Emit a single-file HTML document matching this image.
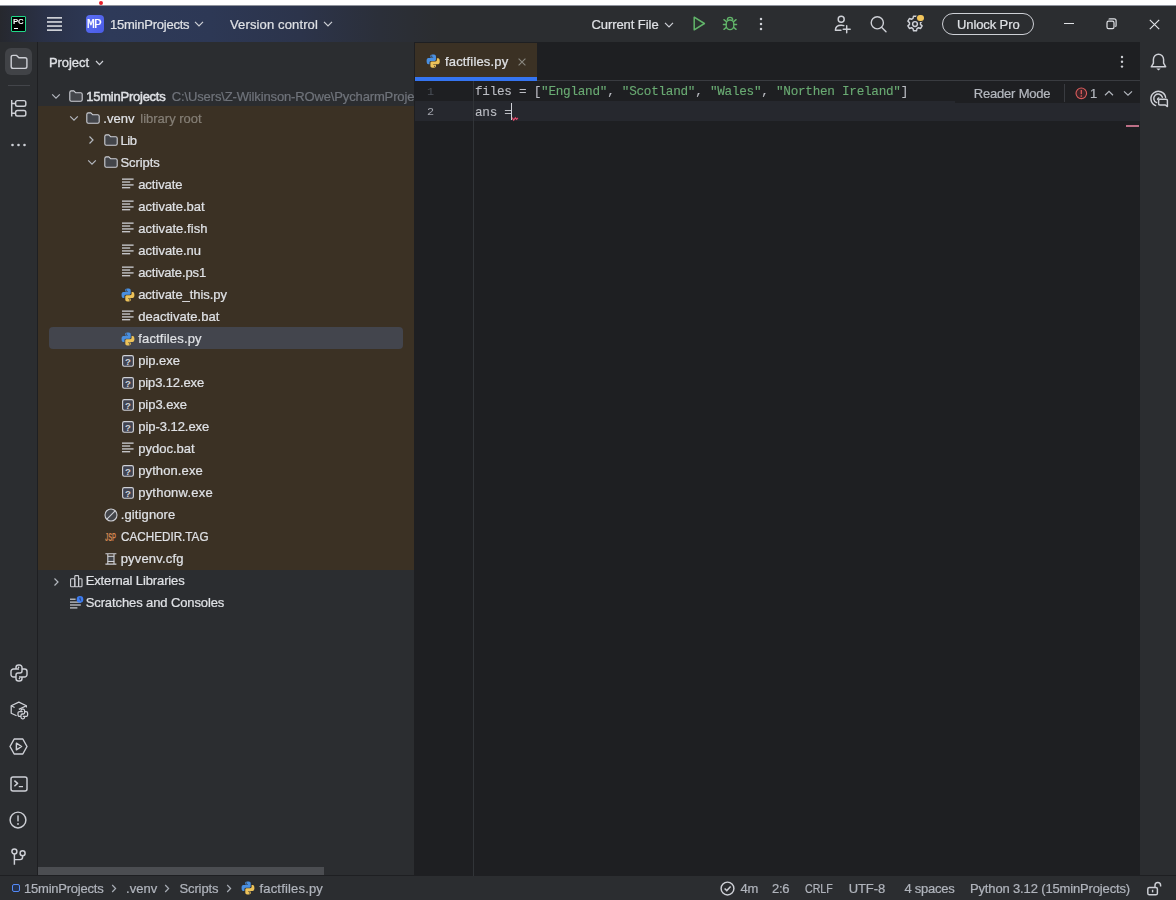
<!DOCTYPE html>
<html lang="en">
<head>
<meta charset="utf-8">
<title>PyCharm - factfiles.py</title>
<style>
*{box-sizing:border-box;margin:0;padding:0}
html,body{width:1176px;height:900px;overflow:hidden;background:#1e1f22}
body{position:relative;font-family:"Liberation Sans",sans-serif;font-size:13px;color:#dfe1e5;-webkit-font-smoothing:antialiased}
.abs{position:absolute}
.t{position:absolute;white-space:nowrap;line-height:16px;height:16px;-webkit-text-stroke:0.22px currentColor}
svg{position:absolute;overflow:visible}
/* regions */
#topwhite{left:0;top:0;width:1176px;height:5px;background:#fff}
#topedge{left:0;top:5px;width:1176px;height:1px;background:#8f939d}
#titlebar{left:0;top:6px;width:1176px;height:36px;background:linear-gradient(90deg,#26282e 0px,#2a3147 45px,#2e3a59 110px,#2d3855 210px,#2c344b 300px,#2b2f39 380px,#2b2d30 440px)}
#rail{left:0;top:42px;width:38px;height:834px;background:#2b2d30;border-right:1px solid #1e1f22}
#proj{left:38px;top:42px;width:376px;height:834px;background:#2b2d30}
#brown{left:38px;top:106px;width:376px;height:464px;background:#3b3124}
#projedge{left:414px;top:42px;width:1px;height:834px;background:#1e1f22}
#editor{left:415px;top:42px;width:725px;height:834px;background:#1e1f22}
#rrail{left:1140px;top:42px;width:36px;height:834px;background:#2b2d30}
#status{left:0;top:875.4px;width:1176px;height:24.6px;background:#2b2d30;border-top:1px solid #1e1f22}
.row{position:absolute;left:38px;width:376px;height:22px}
.mono{font-family:"Liberation Mono",monospace}
</style>
</head>
<body>
<div class="abs" id="topwhite"></div>
<div class="abs" id="topedge"></div>
<div class="abs" style="left:99px;top:1px;width:4px;height:4px;border-radius:50%;background:#e8202a"></div>
<div class="abs" id="titlebar"></div>
<div class="abs" id="rail"></div>
<div class="abs" id="proj"></div>
<div class="abs" id="brown"></div>
<div class="abs" id="projedge"></div>
<div class="abs" id="editor"></div>
<div class="abs" id="rrail"></div>
<div class="abs" id="status"></div>
<!-- PC logo -->
<div class="abs" style="left:11px;top:16px;width:15px;height:16px;background:#000;border:1.5px solid #21d789;border-radius:1px"></div>
<span class="t" style="left:13.2px;top:13.6px;font-size:7.8px;font-weight:bold;color:#fff;letter-spacing:-0.3px;will-change:transform;-webkit-text-stroke:0">PC</span>
<div class="abs" style="left:14px;top:27.5px;width:4px;height:1.3px;background:#fff"></div>
<!-- hamburger -->
<svg style="left:46px;top:16px" width="17" height="16" viewBox="0 0 17 16"><g fill="#ced0d6"><rect x="1" y="1" width="15" height="1.7"/><rect x="1" y="5.1" width="15" height="1.7"/><rect x="1" y="9.2" width="15" height="1.7"/><rect x="1" y="13.3" width="15" height="1.7"/></g></svg>
<!-- MP badge -->
<div class="abs" style="left:86px;top:15px;width:18px;height:18px;border-radius:4px;background:linear-gradient(135deg,#5b6ef5,#4a5ce6)"></div>
<span class="t mono" style="left:87.2px;top:16.8px;font-size:13px;color:#fff;letter-spacing:-0.7px;will-change:transform">MP</span>
<!-- chevrons -->
<svg style="left:194.3px;top:21.3px" width="10" height="6" viewBox="0 0 10 6"><path d="M1 0.9 L5 4.9 L9 0.9" fill="none" stroke="#ced0d6" stroke-width="1.2"/></svg>
<svg style="left:323px;top:21.3px" width="10" height="6" viewBox="0 0 10 6"><path d="M1 0.9 L5 4.9 L9 0.9" fill="none" stroke="#ced0d6" stroke-width="1.2"/></svg>
<svg style="left:663.6px;top:21.6px" width="10" height="6" viewBox="0 0 10 6"><path d="M1 0.9 L5 4.9 L9 0.9" fill="none" stroke="#ced0d6" stroke-width="1.2"/></svg>
<!-- run -->
<svg style="left:692px;top:15px" width="15" height="17" viewBox="0 0 15 17"><path d="M2.2 2.2 L12.4 8.5 L2.2 14.8 Z" fill="#2a3330" stroke="#62b56a" stroke-width="1.5" stroke-linejoin="round"/></svg>
<!-- debug -->
<svg style="left:722px;top:15px" width="16" height="17" viewBox="0 0 16 17"><g fill="none" stroke="#62b56a" stroke-width="1.35" stroke-linecap="round"><path d="M5.3 5 a2.7 2.7 0 0 1 5.4 0"/><rect x="4.2" y="5" width="7.6" height="9.6" rx="3.8" fill="#2a3330"/><path d="M4.2 9.5 H1.4 M11.8 9.5 H14.6 M4.4 6.6 L1.9 4.6 M11.6 6.6 L14.1 4.6 M4.4 12.4 L1.9 14.4 M11.6 12.4 L14.1 14.4"/></g></svg>
<!-- dots -->
<svg style="left:759px;top:17px" width="4" height="14" viewBox="0 0 4 14"><g fill="#ced0d6"><circle cx="2" cy="2" r="1.25"/><circle cx="2" cy="7" r="1.25"/><circle cx="2" cy="12" r="1.25"/></g></svg>
<!-- add user -->
<svg style="left:834px;top:15px" width="18" height="18" viewBox="0 0 18 18"><g fill="none" stroke="#ced0d6" stroke-width="1.45" stroke-linecap="round"><circle cx="7.2" cy="4.3" r="3"/><path d="M1.4 15.2 c0 -3.2 2.4 -5 5.8 -5 c1 0 1.8 0.15 2.6 0.45 M1.4 15.2 H7"/><path d="M12.7 10.8 V17.8 M9.2 14.3 H16.2"/></g></svg>
<!-- search -->
<svg style="left:869px;top:15px" width="19" height="19" viewBox="0 0 19 19"><g fill="none" stroke="#ced0d6" stroke-width="1.4" stroke-linecap="round"><circle cx="8.3" cy="7.8" r="6.1"/><path d="M12.8 12.4 L17 16.7"/></g></svg>
<!-- gear -->
<svg style="left:906px;top:15px" width="18" height="18" viewBox="0 0 18 18"><g fill="none" stroke="#ced0d6" stroke-width="1.45" stroke-linejoin="round"><path d="M7.5 1.2 h3 l0.5 2.2 l1.5 0.85 l2.1 -0.7 l1.5 2.6 l-1.6 1.5 v1.7 l1.6 1.5 l-1.5 2.6 l-2.1 -0.7 l-1.5 0.85 l-0.5 2.2 h-3 l-0.5 -2.2 l-1.5 -0.85 l-2.1 0.7 l-1.5 -2.6 l1.6 -1.5 v-1.7 l-1.6 -1.5 l1.5 -2.6 l2.1 0.7 l1.5 -0.85 z"/><circle cx="9" cy="9" r="2.4"/></g></svg>
<div class="abs" style="left:917.4px;top:14.6px;width:6.6px;height:6.6px;border-radius:50%;background:#f2c55c;box-shadow:0 0 0 1px #2b2d30"></div>
<!-- unlock pro pill -->
<div class="abs" style="left:942px;top:12.5px;width:92px;height:22px;border-radius:11px;border:1.3px solid #ced0d6"></div>
<!-- window controls -->
<div class="abs" style="left:1064px;top:22.6px;width:9.5px;height:1.3px;background:#dfe1e5"></div>
<svg style="left:1106px;top:17.5px" width="11" height="12" viewBox="0 0 11 12"><g fill="none" stroke="#dfe1e5" stroke-width="1.2"><rect x="1" y="3.2" width="7" height="7.4" rx="1.6"/><path d="M3 1.6 q0 -0.8 0.9 -0.8 h4.2 q2 0 2 2 v4.6 q0 0.9 -0.9 0.9"/></g></svg>
<svg style="left:1149px;top:18.5px" width="11" height="11" viewBox="0 0 11 11"><path d="M0.8 0.8 L10.2 10.2 M10.2 0.8 L0.8 10.2" fill="none" stroke="#dfe1e5" stroke-width="1.2"/></svg>

<!-- project button -->
<div class="abs" style="left:5px;top:48px;width:27px;height:27px;border-radius:6px;background:#414347"></div>
<svg style="left:9.5px;top:54px" width="18" height="16" viewBox="0 0 18 16"><path d="M1.2 3.2 q0 -1.8 1.8 -1.8 h3.6 l2.3 2.4 h6.2 q1.8 0 1.8 1.8 v7 q0 1.8 -1.8 1.8 h-12.1 q-1.8 0 -1.8 -1.8 z" fill="none" stroke="#ced0d6" stroke-width="1.4" stroke-linejoin="round"/></svg>
<div class="abs" style="left:8px;top:84.5px;width:22px;height:1.2px;background:#43454a"></div>
<!-- structure -->
<svg style="left:10px;top:99px" width="17" height="19" viewBox="0 0 17 19"><g fill="none" stroke="#ced0d6" stroke-width="1.45"><path d="M1.7 1 V17.4 M1.7 4.4 H5.6 M1.7 14.2 H5.6"/><rect x="5.6" y="1.6" width="10.2" height="5.6" rx="1.8"/><rect x="5.6" y="11.4" width="10.2" height="5.6" rx="1.8"/></g></svg>
<!-- dots -->
<svg style="left:10px;top:143px" width="17" height="4" viewBox="0 0 17 4"><g fill="#ced0d6"><circle cx="2.5" cy="2" r="1.3"/><circle cx="8.5" cy="2" r="1.3"/><circle cx="14.5" cy="2" r="1.3"/></g></svg>
<!-- python console -->
<svg style="left:9.5px;top:663.8px" width="18" height="18" viewBox="0 0 18 18"><path d="M6 5 V3.5 A2.5 2.5 0 0 1 8.5 1 H9.5 A2.5 2.5 0 0 1 12 3.5 V7 A2 2 0 0 1 10 9 H8 A2 2 0 0 0 6 11 V13 H3.5 A2.5 2.5 0 0 1 1 10.5 V7.5 A2.5 2.5 0 0 1 3.5 5 H9 M12 13 V14.5 A2.5 2.5 0 0 1 9.5 17 H8.5 A2.5 2.5 0 0 1 6 14.5 V13 M8 9 H10 A2 2 0 0 0 12 7 V5 H14.5 A2.5 2.5 0 0 1 17 7.5 V10.5 A2.5 2.5 0 0 1 14.5 13 H9" fill="none" stroke="#ced0d6" stroke-width="1.45" stroke-linejoin="round"/><circle cx="8.6" cy="3.4" r="0.8" fill="#ced0d6"/><circle cx="9.4" cy="14.6" r="0.8" fill="#ced0d6"/></svg>
<!-- python packages -->
<svg style="left:9.5px;top:700.5px" width="19" height="19" viewBox="0 0 19 19"><g fill="none" stroke="#ced0d6" stroke-width="1.25" stroke-linejoin="round"><path d="M6.6 14.8 L1.2 12.2 V4.8 L8.8 1.1 L16.4 4.8 V6.6"/><path d="M1.2 4.8 L4.6 6.5 M16.4 4.8 L8.8 8.4"/><g transform="translate(7.4,7.6) scale(0.6)"><path d="M6 5 V3.5 A2.5 2.5 0 0 1 8.5 1 H9.5 A2.5 2.5 0 0 1 12 3.5 V7 A2 2 0 0 1 10 9 H8 A2 2 0 0 0 6 11 V13 H3.5 A2.5 2.5 0 0 1 1 10.5 V7.5 A2.5 2.5 0 0 1 3.5 5 H9 M12 13 V14.5 A2.5 2.5 0 0 1 9.5 17 H8.5 A2.5 2.5 0 0 1 6 14.5 V13 M8 9 H10 A2 2 0 0 0 12 7 V5 H14.5 A2.5 2.5 0 0 1 17 7.5 V10.5 A2.5 2.5 0 0 1 14.5 13 H9" stroke-width="2.1"/></g></g></svg>
<!-- services -->
<svg style="left:9px;top:738px" width="19" height="17" viewBox="0 0 19 17"><g fill="none" stroke="#ced0d6" stroke-width="1.45" stroke-linejoin="round"><path d="M5.2 1 H13.8 L18 8.5 L13.8 16 H5.2 L1 8.5 Z"/><path d="M7.4 5.2 L12.6 8.5 L7.4 11.8 Z"/></g></svg>
<!-- terminal -->
<svg style="left:9.5px;top:775.5px" width="18" height="16" viewBox="0 0 18 16"><g fill="none" stroke="#ced0d6" stroke-width="1.45" stroke-linejoin="round"><rect x="1" y="1" width="16" height="14" rx="2"/><path d="M4.4 4.6 L7.6 7.4 L4.4 10.2 M8.8 10.6 H13"/></g></svg>
<!-- problems -->
<svg style="left:9.3px;top:810.8px" width="18" height="18" viewBox="0 0 18 18"><circle cx="9" cy="9" r="7.9" fill="none" stroke="#ced0d6" stroke-width="1.45"/><rect x="8.3" y="4.4" width="1.4" height="6" fill="#ced0d6"/><circle cx="9" cy="12.9" r="0.95" fill="#ced0d6"/></svg>
<!-- git -->
<svg style="left:10px;top:848px" width="17" height="18" viewBox="0 0 17 18"><g fill="none" stroke="#ced0d6" stroke-width="1.45"><circle cx="4.4" cy="3.5" r="2.5"/><circle cx="12.6" cy="5.3" r="2.5"/><path d="M4.4 6 V16.8 M12.6 7.8 V9 q0 2.6 -2.6 2.6 H4.4"/></g></svg>

<div class="abs" style="left:49px;top:327.2px;width:354px;height:22px;border-radius:4px;background:#43454d"></div>
<svg style="left:51.4px;top:93.0px" width="10" height="7" viewBox="0 0 10 7"><path d="M1.2 1.4 L5 5.2 L8.8 1.4" fill="none" stroke="#b4b8bf" stroke-width="1.2"/></svg>
<svg style="left:68.6px;top:89.8px" width="14" height="12" viewBox="0 0 14 12"><path d="M0.8 2.4 q0 -1.5 1.5 -1.5 h2.6 l1.9 1.9 h4.9 q1.5 0 1.5 1.5 v5.4 q0 1.5 -1.5 1.5 h-9.4 q-1.5 0 -1.5 -1.5 z" fill="#43454a" stroke="#ced0d6" stroke-width="1.1" stroke-linejoin="round"/></svg>
<svg style="left:69.0px;top:115.0px" width="10" height="7" viewBox="0 0 10 7"><path d="M1.2 1.4 L5 5.2 L8.8 1.4" fill="none" stroke="#b4b8bf" stroke-width="1.2"/></svg>
<svg style="left:86.0px;top:111.8px" width="14" height="12" viewBox="0 0 14 12"><path d="M0.8 2.4 q0 -1.5 1.5 -1.5 h2.6 l1.9 1.9 h4.9 q1.5 0 1.5 1.5 v5.4 q0 1.5 -1.5 1.5 h-9.4 q-1.5 0 -1.5 -1.5 z" fill="#43454a" stroke="#ced0d6" stroke-width="1.1" stroke-linejoin="round"/></svg>
<svg style="left:87.8px;top:135.0px" width="7" height="10" viewBox="0 0 7 10"><path d="M1.5 1.5 L5 5 L1.5 8.5" fill="none" stroke="#b4b8bf" stroke-width="1.2"/></svg>
<svg style="left:103.6px;top:133.8px" width="14" height="12" viewBox="0 0 14 12"><path d="M0.8 2.4 q0 -1.5 1.5 -1.5 h2.6 l1.9 1.9 h4.9 q1.5 0 1.5 1.5 v5.4 q0 1.5 -1.5 1.5 h-9.4 q-1.5 0 -1.5 -1.5 z" fill="#43454a" stroke="#ced0d6" stroke-width="1.1" stroke-linejoin="round"/></svg>
<svg style="left:86.5px;top:159.0px" width="10" height="7" viewBox="0 0 10 7"><path d="M1.2 1.4 L5 5.2 L8.8 1.4" fill="none" stroke="#b4b8bf" stroke-width="1.2"/></svg>
<svg style="left:103.6px;top:155.8px" width="14" height="12" viewBox="0 0 14 12"><path d="M0.8 2.4 q0 -1.5 1.5 -1.5 h2.6 l1.9 1.9 h4.9 q1.5 0 1.5 1.5 v5.4 q0 1.5 -1.5 1.5 h-9.4 q-1.5 0 -1.5 -1.5 z" fill="#43454a" stroke="#ced0d6" stroke-width="1.1" stroke-linejoin="round"/></svg>
<svg style="left:122.0px;top:178.3px" width="12" height="11" viewBox="0 0 12 11"><g fill="#d3d5da"><rect x="0" y="0.5" width="11.6" height="1.25"/><rect x="0" y="3.4" width="8.2" height="1.25"/><rect x="0" y="6.3" width="11.6" height="1.25"/><rect x="0" y="9.1" width="8.2" height="1.25"/></g></svg>
<svg style="left:122.0px;top:200.3px" width="12" height="11" viewBox="0 0 12 11"><g fill="#d3d5da"><rect x="0" y="0.5" width="11.6" height="1.25"/><rect x="0" y="3.4" width="8.2" height="1.25"/><rect x="0" y="6.3" width="11.6" height="1.25"/><rect x="0" y="9.1" width="8.2" height="1.25"/></g></svg>
<svg style="left:122.0px;top:222.3px" width="12" height="11" viewBox="0 0 12 11"><g fill="#d3d5da"><rect x="0" y="0.5" width="11.6" height="1.25"/><rect x="0" y="3.4" width="8.2" height="1.25"/><rect x="0" y="6.3" width="11.6" height="1.25"/><rect x="0" y="9.1" width="8.2" height="1.25"/></g></svg>
<svg style="left:122.0px;top:244.3px" width="12" height="11" viewBox="0 0 12 11"><g fill="#d3d5da"><rect x="0" y="0.5" width="11.6" height="1.25"/><rect x="0" y="3.4" width="8.2" height="1.25"/><rect x="0" y="6.3" width="11.6" height="1.25"/><rect x="0" y="9.1" width="8.2" height="1.25"/></g></svg>
<svg style="left:122.0px;top:266.3px" width="12" height="11" viewBox="0 0 12 11"><g fill="#d3d5da"><rect x="0" y="0.5" width="11.6" height="1.25"/><rect x="0" y="3.4" width="8.2" height="1.25"/><rect x="0" y="6.3" width="11.6" height="1.25"/><rect x="0" y="9.1" width="8.2" height="1.25"/></g></svg>
<svg style="left:121.0px;top:287.5px" width="14" height="14" viewBox="0 0 14 14"><path d="M6.9 0.6 C4.2 0.6 4.3 1.8 4.3 1.8 V3.5 H7 V4 H2.4 C2.4 4 0.6 3.8 0.6 6.9 C0.6 10 2.2 9.9 2.2 9.9 H3.4 V8.3 C3.4 8.3 3.3 6.7 5 6.7 H8.3 C8.3 6.7 9.7 6.7 9.7 5.3 V2.3 C9.7 2.3 9.9 0.6 6.9 0.6 Z" fill="#4a8fe0"/><path d="M7.1 13.4 C9.8 13.4 9.7 12.2 9.7 12.2 V10.5 H7 V10 H11.6 C11.6 10 13.4 10.2 13.4 7.1 C13.4 4 11.8 4.1 11.8 4.1 H10.6 V5.7 C10.6 5.7 10.7 7.3 9 7.3 H5.7 C5.7 7.3 4.3 7.3 4.3 8.7 V11.7 C4.3 11.7 4.1 13.4 7.1 13.4 Z" fill="#ecc25a"/><circle cx="5.6" cy="2.1" r="0.55" fill="#2b2d30"/><circle cx="8.4" cy="11.9" r="0.55" fill="#2b2d30"/></svg>
<svg style="left:122.0px;top:310.3px" width="12" height="11" viewBox="0 0 12 11"><g fill="#d3d5da"><rect x="0" y="0.5" width="11.6" height="1.25"/><rect x="0" y="3.4" width="8.2" height="1.25"/><rect x="0" y="6.3" width="11.6" height="1.25"/><rect x="0" y="9.1" width="8.2" height="1.25"/></g></svg>
<svg style="left:121.0px;top:331.5px" width="14" height="14" viewBox="0 0 14 14"><path d="M6.9 0.6 C4.2 0.6 4.3 1.8 4.3 1.8 V3.5 H7 V4 H2.4 C2.4 4 0.6 3.8 0.6 6.9 C0.6 10 2.2 9.9 2.2 9.9 H3.4 V8.3 C3.4 8.3 3.3 6.7 5 6.7 H8.3 C8.3 6.7 9.7 6.7 9.7 5.3 V2.3 C9.7 2.3 9.9 0.6 6.9 0.6 Z" fill="#4a8fe0"/><path d="M7.1 13.4 C9.8 13.4 9.7 12.2 9.7 12.2 V10.5 H7 V10 H11.6 C11.6 10 13.4 10.2 13.4 7.1 C13.4 4 11.8 4.1 11.8 4.1 H10.6 V5.7 C10.6 5.7 10.7 7.3 9 7.3 H5.7 C5.7 7.3 4.3 7.3 4.3 8.7 V11.7 C4.3 11.7 4.1 13.4 7.1 13.4 Z" fill="#ecc25a"/><circle cx="5.6" cy="2.1" r="0.55" fill="#2b2d30"/><circle cx="8.4" cy="11.9" r="0.55" fill="#2b2d30"/></svg>
<svg style="left:121.8px;top:354.6px" width="12" height="12" viewBox="0 0 12 12"><rect x="0.6" y="0.6" width="10.8" height="10.6" rx="1.6" fill="#40424f" stroke="#ced0d6" stroke-width="1.15"/><text x="6" y="9.5" text-anchor="middle" font-family="Liberation Sans,sans-serif" font-size="9.6" font-weight="bold" fill="#ced0d6">?</text></svg>
<svg style="left:121.8px;top:376.6px" width="12" height="12" viewBox="0 0 12 12"><rect x="0.6" y="0.6" width="10.8" height="10.6" rx="1.6" fill="#40424f" stroke="#ced0d6" stroke-width="1.15"/><text x="6" y="9.5" text-anchor="middle" font-family="Liberation Sans,sans-serif" font-size="9.6" font-weight="bold" fill="#ced0d6">?</text></svg>
<svg style="left:121.8px;top:398.6px" width="12" height="12" viewBox="0 0 12 12"><rect x="0.6" y="0.6" width="10.8" height="10.6" rx="1.6" fill="#40424f" stroke="#ced0d6" stroke-width="1.15"/><text x="6" y="9.5" text-anchor="middle" font-family="Liberation Sans,sans-serif" font-size="9.6" font-weight="bold" fill="#ced0d6">?</text></svg>
<svg style="left:121.8px;top:420.6px" width="12" height="12" viewBox="0 0 12 12"><rect x="0.6" y="0.6" width="10.8" height="10.6" rx="1.6" fill="#40424f" stroke="#ced0d6" stroke-width="1.15"/><text x="6" y="9.5" text-anchor="middle" font-family="Liberation Sans,sans-serif" font-size="9.6" font-weight="bold" fill="#ced0d6">?</text></svg>
<svg style="left:122.0px;top:442.3px" width="12" height="11" viewBox="0 0 12 11"><g fill="#d3d5da"><rect x="0" y="0.5" width="11.6" height="1.25"/><rect x="0" y="3.4" width="8.2" height="1.25"/><rect x="0" y="6.3" width="11.6" height="1.25"/><rect x="0" y="9.1" width="8.2" height="1.25"/></g></svg>
<svg style="left:121.8px;top:464.6px" width="12" height="12" viewBox="0 0 12 12"><rect x="0.6" y="0.6" width="10.8" height="10.6" rx="1.6" fill="#40424f" stroke="#ced0d6" stroke-width="1.15"/><text x="6" y="9.5" text-anchor="middle" font-family="Liberation Sans,sans-serif" font-size="9.6" font-weight="bold" fill="#ced0d6">?</text></svg>
<svg style="left:121.8px;top:486.6px" width="12" height="12" viewBox="0 0 12 12"><rect x="0.6" y="0.6" width="10.8" height="10.6" rx="1.6" fill="#40424f" stroke="#ced0d6" stroke-width="1.15"/><text x="6" y="9.5" text-anchor="middle" font-family="Liberation Sans,sans-serif" font-size="9.6" font-weight="bold" fill="#ced0d6">?</text></svg>
<svg style="left:103.5px;top:508.0px" width="14" height="14" viewBox="0 0 14 14"><circle cx="7" cy="7" r="6" fill="#43454a" stroke="#ced0d6" stroke-width="1.1"/><path d="M2.9 11.1 L11.1 2.9" stroke="#ced0d6" stroke-width="1.1"/></svg>
<span class="t" style="left:104.6px;top:529.0px;font-size:10.5px;font-weight:bold;color:#cf8450;letter-spacing:-0.2px;-webkit-text-stroke:0;transform:scaleX(0.56);transform-origin:0 50%">JSP</span>
<svg style="left:104.8px;top:553.2px" width="12" height="12" viewBox="0 0 12 12"><g fill="none" stroke="#ced0d6" stroke-width="1.1"><path d="M0.4 0.7 H11.4 M0.4 11.1 H11.4 M2.8 0.7 V3.3 M9 0.7 V3.3 M2.8 8.5 V11.1 M9 8.5 V11.1"/><rect x="2.8" y="3.3" width="6.2" height="5.2" fill="#43454a"/></g></svg>
<svg style="left:52.6px;top:576.5px" width="7" height="10" viewBox="0 0 7 10"><path d="M1.5 1.5 L5 5 L1.5 8.5" fill="none" stroke="#b4b8bf" stroke-width="1.2"/></svg>
<svg style="left:69.6px;top:575.2px" width="13" height="13" viewBox="0 0 13 13"><g fill="none" stroke="#ced0d6" stroke-width="1.1" stroke-linejoin="round"><rect x="0.6" y="3.8" width="4.2" height="8" rx="0.8"/><rect x="4.8" y="0.6" width="3.8" height="11.2" rx="0.8"/><rect x="8.6" y="3.8" width="3.4" height="8" rx="0.8"/></g></svg>
<svg style="left:70.0px;top:596.4px" width="14" height="13" viewBox="0 0 14 13"><g fill="#ced0d6"><rect x="0" y="2.6" width="5.6" height="1.2"/><rect x="0" y="5.5" width="10.8" height="1.2"/><rect x="0" y="8.4" width="10.8" height="1.2"/><rect x="0" y="11.3" width="7.4" height="1.2"/></g><circle cx="10" cy="3.4" r="3.3" fill="#3d7cf0"/><path d="M10 1.6 V3.6 L11.2 4.6" fill="none" stroke="#1e2a4a" stroke-width="0.9"/></svg>
<svg style="left:95px;top:59.6px" width="9" height="6" viewBox="0 0 9 6"><path d="M1 1 L4.5 4.6 L8 1" fill="none" stroke="#ced0d6" stroke-width="1.2"/></svg>
<div class="abs" style="left:38px;top:867px;width:286px;height:8px;background:#4b4d51"></div>

<div class="abs" style="left:415px;top:80px;width:725px;height:1px;background:#393b40"></div>
<div class="abs" style="left:415px;top:43px;width:122px;height:35px;background:#3b3124"></div>
<div class="abs" style="left:415px;top:77px;width:122px;height:4px;background:#3574f0"></div>
<svg style="left:425.8px;top:54.4px" width="14.4" height="14.4" viewBox="0 0 14 14"><path d="M6.9 0.6 C4.2 0.6 4.3 1.8 4.3 1.8 V3.5 H7 V4 H2.4 C2.4 4 0.6 3.8 0.6 6.9 C0.6 10 2.2 9.9 2.2 9.9 H3.4 V8.3 C3.4 8.3 3.3 6.7 5 6.7 H8.3 C8.3 6.7 9.7 6.7 9.7 5.3 V2.3 C9.7 2.3 9.9 0.6 6.9 0.6 Z" fill="#4a8fe0"/><path d="M7.1 13.4 C9.8 13.4 9.7 12.2 9.7 12.2 V10.5 H7 V10 H11.6 C11.6 10 13.4 10.2 13.4 7.1 C13.4 4 11.8 4.1 11.8 4.1 H10.6 V5.7 C10.6 5.7 10.7 7.3 9 7.3 H5.7 C5.7 7.3 4.3 7.3 4.3 8.7 V11.7 C4.3 11.7 4.1 13.4 7.1 13.4 Z" fill="#ecc25a"/><circle cx="5.6" cy="2.1" r="0.55" fill="#2b2d30"/><circle cx="8.4" cy="11.9" r="0.55" fill="#2b2d30"/></svg>
<svg style="left:518.2px;top:57.8px" width="8" height="8" viewBox="0 0 8 8"><path d="M0.6 0.6 L7.4 7.4 M7.4 0.6 L0.6 7.4" fill="none" stroke="#8a8880" stroke-width="1.1"/></svg>
<svg style="left:1120px;top:55px" width="4" height="14" viewBox="0 0 4 14"><g fill="#ced0d6"><circle cx="2" cy="2" r="1.2"/><circle cx="2" cy="6.8" r="1.2"/><circle cx="2" cy="11.6" r="1.2"/></g></svg>
<div class="abs" style="left:415px;top:101px;width:725px;height:20.3px;background:#26282e"></div>
<div class="abs" style="left:472.5px;top:81px;width:1px;height:795px;background:#313438"></div>
<span class="t mono" style="left:426.6px;top:81.5px;will-change:transform;font-size:11.8px;line-height:20px;height:20px;-webkit-text-stroke:0;color:#4b5059">1</span>
<span class="t mono" style="left:426.6px;top:101.8px;will-change:transform;font-size:11.8px;line-height:20px;height:20px;-webkit-text-stroke:0;color:#a1a3ab">2</span>
<span class="t mono" style="left:474.6px;top:82.2px;will-change:transform;-webkit-text-stroke:0.1px currentColor;font-size:12.7px;letter-spacing:-0.275px;line-height:20px;height:20px;color:#bcbec4;white-space:pre">files = [<span style="color:#6aab73">"England"</span>, <span style="color:#6aab73">"Scotland"</span>, <span style="color:#6aab73">"Wales"</span>, <span style="color:#6aab73">"Northen Ireland"</span>]</span>
<span class="t mono" style="left:474.6px;top:102.5px;will-change:transform;-webkit-text-stroke:0.1px currentColor;font-size:12.7px;letter-spacing:-0.275px;line-height:20px;height:20px;color:#bcbec4;white-space:pre">ans =</span>
<div class="abs" style="left:510.5px;top:102.8px;width:1.7px;height:17.2px;background:#ced0d6"></div>
<svg style="left:512px;top:117px" width="7" height="4" viewBox="0 0 7 4"><path d="M0.2 0.6 L1.7 3.2 L3.4 0.8 L4.6 2.4 L5.9 0.8" fill="none" stroke="#e0486a" stroke-width="1.15"/></svg>
<div class="abs" style="left:955px;top:81px;width:185px;height:21.5px;background:#1e1f22"></div>
<div class="abs" style="left:1064.3px;top:84px;width:1px;height:17.5px;background:#393b40"></div>
<svg style="left:1075px;top:86.8px" width="13" height="13" viewBox="0 0 13 13"><circle cx="6.3" cy="6.3" r="5.3" fill="#3d2327" stroke="#db5c5c" stroke-width="1.1"/><rect x="5.65" y="3" width="1.3" height="4.2" fill="#db5c5c"/><circle cx="6.3" cy="9" r="0.85" fill="#db5c5c"/></svg>
<svg style="left:1104px;top:89.8px" width="10" height="7" viewBox="0 0 10 7"><path d="M1 5.2 L5 1.4 L9 5.2" fill="none" stroke="#b4b8bf" stroke-width="1.2"/></svg>
<svg style="left:1123.2px;top:89.8px" width="10" height="7" viewBox="0 0 10 7"><path d="M1 1.4 L5 5.2 L9 1.4" fill="none" stroke="#b4b8bf" stroke-width="1.2"/></svg>
<div class="abs" style="left:1126px;top:125px;width:13.4px;height:2.3px;background:#bd6f86"></div>

<!-- bell -->
<svg style="left:1150px;top:52.5px" width="17" height="18" viewBox="0 0 17 18"><path d="M1.3 13.8 H15.7 L13.6 10.2 V6.4 A5.1 5.1 0 0 0 3.4 6.4 V10.2 Z" fill="none" stroke="#ced0d6" stroke-width="1.45" stroke-linejoin="round"/><path d="M6.3 15.4 H10.7 L8.5 17.4 Z" fill="#ced0d6"/></svg>
<!-- ai assistant -->
<svg style="left:1150px;top:90px" width="19" height="18" viewBox="0 0 19 18"><g fill="none" stroke="#ced0d6" stroke-width="1.45" stroke-linecap="round"><path d="M5.6 15.6 A7.4 7.4 0 1 1 15.6 7.4"/><path d="M6.6 12.6 A4.4 4.4 0 1 1 12.4 7.2"/><path d="M7.6 9.4 A1.6 1.6 0 0 1 8.8 8"/><path d="M9.8 9.2 H16.2 Q17.4 9.2 17.4 10.4 V16.6 L15.4 15 H9.8 Q8.6 15 8.6 13.8 V10.4 Q8.6 9.2 9.8 9.2 Z" fill="#2b2d30" stroke-linejoin="round"/></g></svg>

<div class="abs" style="left:12.2px;top:884.2px;width:7.8px;height:8px;border:1.3px solid #548af7;border-radius:2px;background:#25324d"></div>
<svg style="left:111.3px;top:883.8px" width="6" height="9" viewBox="0 0 6 9"><path d="M1.2 1 L4.6 4.5 L1.2 8" fill="none" stroke="#a8adb5" stroke-width="1.2"/></svg>
<svg style="left:164.3px;top:883.8px" width="6" height="9" viewBox="0 0 6 9"><path d="M1.2 1 L4.6 4.5 L1.2 8" fill="none" stroke="#a8adb5" stroke-width="1.2"/></svg>
<svg style="left:226.3px;top:883.8px" width="6" height="9" viewBox="0 0 6 9"><path d="M1.2 1 L4.6 4.5 L1.2 8" fill="none" stroke="#a8adb5" stroke-width="1.2"/></svg>
<svg style="left:241.0px;top:881.3px" width="14" height="14" viewBox="0 0 14 14"><path d="M6.9 0.6 C4.2 0.6 4.3 1.8 4.3 1.8 V3.5 H7 V4 H2.4 C2.4 4 0.6 3.8 0.6 6.9 C0.6 10 2.2 9.9 2.2 9.9 H3.4 V8.3 C3.4 8.3 3.3 6.7 5 6.7 H8.3 C8.3 6.7 9.7 6.7 9.7 5.3 V2.3 C9.7 2.3 9.9 0.6 6.9 0.6 Z" fill="#4a8fe0"/><path d="M7.1 13.4 C9.8 13.4 9.7 12.2 9.7 12.2 V10.5 H7 V10 H11.6 C11.6 10 13.4 10.2 13.4 7.1 C13.4 4 11.8 4.1 11.8 4.1 H10.6 V5.7 C10.6 5.7 10.7 7.3 9 7.3 H5.7 C5.7 7.3 4.3 7.3 4.3 8.7 V11.7 C4.3 11.7 4.1 13.4 7.1 13.4 Z" fill="#ecc25a"/><circle cx="5.6" cy="2.1" r="0.55" fill="#2b2d30"/><circle cx="8.4" cy="11.9" r="0.55" fill="#2b2d30"/></svg>
<svg style="left:719.5px;top:881px" width="15" height="15" viewBox="0 0 15 15"><circle cx="7.5" cy="7.5" r="6.4" fill="none" stroke="#ced0d6" stroke-width="1.45"/><path d="M4.6 7.4 L6.8 9.6 L10.6 5.6" fill="none" stroke="#ced0d6" stroke-width="1.45"/></svg>
<svg style="left:1146.5px;top:880.5px" width="16" height="15" viewBox="0 0 16 15"><g fill="none" stroke="#ced0d6" stroke-width="1.45"><rect x="0.8" y="6.4" width="9.6" height="7.4" rx="1.6"/><path d="M8 6.4 V4.2 Q8 1.4 10.8 1.4 Q13.6 1.4 13.6 4.2 V5.4"/></g><rect x="4.9" y="8.8" width="1.4" height="2.6" fill="#ced0d6"/></svg>

<div style="position:absolute;left:0;top:0;width:1176px;height:900px;will-change:transform">
<span class="t" style="left:110.0px;top:16.8px;color:#dfe1e5;letter-spacing:-0.237px;">15minProjects</span>
<span class="t" style="left:230.0px;top:16.8px;color:#dfe1e5;letter-spacing:0.133px;">Version control</span>
<span class="t" style="left:591.4px;top:16.8px;color:#dfe1e5;letter-spacing:-0.060px;">Current File</span>
<span class="t" style="left:957.0px;top:16.8px;color:#dfe1e5;letter-spacing:-0.108px;">Unlock Pro</span>
<span class="t" style="left:49.0px;top:54.8px;color:#dfe1e5;letter-spacing:-0.067px;-webkit-text-stroke:0.35px #dfe1e5">Project</span>
<span class="t" style="left:86.3px;top:88.8px;color:#dfe1e5;letter-spacing:-0.244px;-webkit-text-stroke:0.45px #dfe1e5">15minProjects</span>
<span class="t" style="left:171.8px;top:88.8px;color:#6f737a;letter-spacing:-0.139px;">C:\Users\Z-Wilkinson-ROwe\PycharmProje</span>
<span class="t" style="left:103.3px;top:110.8px;color:#dfe1e5;letter-spacing:0.004px;">.venv</span>
<span class="t" style="left:140.3px;top:110.8px;color:#857f76;letter-spacing:-0.010px;">library root</span>
<span class="t" style="left:120.4px;top:132.8px;color:#dfe1e5;letter-spacing:-0.320px;">Lib</span>
<span class="t" style="left:120.4px;top:154.8px;color:#dfe1e5;letter-spacing:-0.076px;">Scripts</span>
<span class="t" style="left:138.2px;top:176.8px;color:#dfe1e5;letter-spacing:-0.064px;">activate</span>
<span class="t" style="left:138.2px;top:198.8px;color:#dfe1e5;letter-spacing:-0.008px;">activate.bat</span>
<span class="t" style="left:138.2px;top:220.8px;color:#dfe1e5;letter-spacing:0.050px;">activate.fish</span>
<span class="t" style="left:138.2px;top:242.8px;color:#dfe1e5;letter-spacing:-0.007px;">activate.nu</span>
<span class="t" style="left:138.2px;top:264.8px;color:#dfe1e5;letter-spacing:-0.131px;">activate.ps1</span>
<span class="t" style="left:138.2px;top:286.8px;color:#dfe1e5;letter-spacing:-0.051px;">activate_this.py</span>
<span class="t" style="left:138.2px;top:308.8px;color:#dfe1e5;letter-spacing:0.010px;">deactivate.bat</span>
<span class="t" style="left:138.2px;top:330.8px;color:#dfe1e5;letter-spacing:0.182px;">factfiles.py</span>
<span class="t" style="left:138.2px;top:352.8px;color:#dfe1e5;letter-spacing:-0.017px;">pip.exe</span>
<span class="t" style="left:138.2px;top:374.8px;color:#dfe1e5;letter-spacing:-0.130px;">pip3.12.exe</span>
<span class="t" style="left:138.2px;top:396.8px;color:#dfe1e5;letter-spacing:-0.045px;">pip3.exe</span>
<span class="t" style="left:138.2px;top:418.8px;color:#dfe1e5;letter-spacing:-0.039px;">pip-3.12.exe</span>
<span class="t" style="left:138.2px;top:440.8px;color:#dfe1e5;letter-spacing:0.003px;">pydoc.bat</span>
<span class="t" style="left:138.2px;top:462.8px;color:#dfe1e5;letter-spacing:0.109px;">python.exe</span>
<span class="t" style="left:138.2px;top:484.8px;color:#dfe1e5;letter-spacing:0.220px;">pythonw.exe</span>
<span class="t" style="left:120.7px;top:506.8px;color:#dfe1e5;letter-spacing:0.122px;">.gitignore</span>
<span class="t" style="left:120.7px;top:528.8px;color:#dfe1e5;letter-spacing:0.000px;;transform:scaleX(0.8996);transform-origin:0 50%">CACHEDIR.TAG</span>
<span class="t" style="left:120.7px;top:550.8px;color:#dfe1e5;letter-spacing:0.171px;">pyvenv.cfg</span>
<span class="t" style="left:85.7px;top:572.8px;color:#dfe1e5;letter-spacing:-0.125px;">External Libraries</span>
<span class="t" style="left:85.7px;top:594.8px;color:#dfe1e5;letter-spacing:-0.106px;">Scratches and Consoles</span>
<span class="t" style="left:445.0px;top:54.0px;color:#dfe1e5;letter-spacing:0.157px;">factfiles.py</span>
<span class="t" style="left:973.8px;top:85.8px;color:#b4b8bf;letter-spacing:-0.198px;">Reader Mode</span>
<span class="t" style="left:1090.0px;top:85.8px;color:#b4b8bf;letter-spacing:0.000px;">1</span>
<span class="t" style="left:24.0px;top:880.8px;color:#b0b4bc;letter-spacing:-0.221px;">15minProjects</span>
<span class="t" style="left:126.0px;top:880.8px;color:#b0b4bc;letter-spacing:0.044px;">.venv</span>
<span class="t" style="left:179.4px;top:880.8px;color:#b0b4bc;letter-spacing:-0.091px;">Scripts</span>
<span class="t" style="left:259.5px;top:880.8px;color:#b0b4bc;letter-spacing:0.173px;">factfiles.py</span>
<span class="t" style="left:740.5px;top:880.8px;color:#b0b4bc;letter-spacing:-0.281px;">4m</span>
<span class="t" style="left:771.9px;top:880.8px;color:#b0b4bc;letter-spacing:-0.226px;">2:6</span>
<span class="t" style="left:805.0px;top:880.8px;color:#b0b4bc;letter-spacing:0.000px;;transform:scaleX(0.8188);transform-origin:0 50%">CRLF</span>
<span class="t" style="left:848.8px;top:880.8px;color:#b0b4bc;letter-spacing:-0.129px;">UTF-8</span>
<span class="t" style="left:904.6px;top:880.8px;color:#b0b4bc;letter-spacing:-0.281px;">4 spaces</span>
<span class="t" style="left:970.0px;top:880.8px;color:#b0b4bc;letter-spacing:-0.149px;">Python 3.12 (15minProjects)</span>
</div>
</body>
</html>
